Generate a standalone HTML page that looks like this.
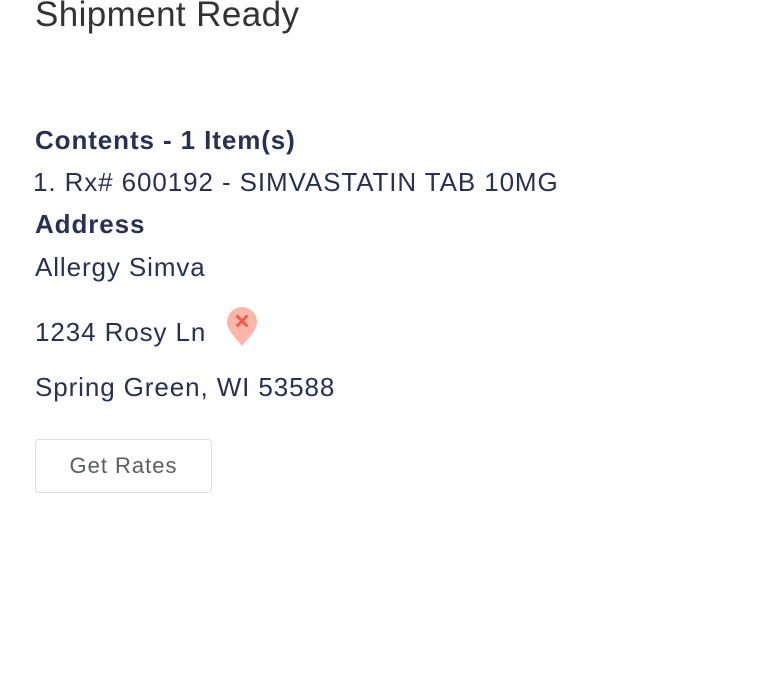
<!DOCTYPE html>
<html><head><meta charset="utf-8"><style>
body{margin:0;width:760px;height:674px;background:#fff;position:relative;overflow:hidden;font-family:"Liberation Sans",sans-serif;color:#283152}
.t{position:absolute;left:35px;white-space:nowrap;line-height:1}
.b{font-size:26px;letter-spacing:0.9px}
.bold{font-weight:bold}
.btn{position:absolute;left:35px;top:439px;width:177px;height:54px;border:1.5px solid #dcdde3;border-radius:4px;box-sizing:border-box;text-align:center;line-height:52px;font-size:22px;color:#5b5d63;letter-spacing:1px}
</style></head><body>
<div class="t" style="top:-3px;font-size:35px;color:#333;letter-spacing:0.4px">Shipment Ready</div>
<div class="t b bold" style="top:127px">Contents - 1 Item(s)</div>
<div class="t b" style="top:169px;left:33px">1. Rx# 600192 - SIMVASTATIN TAB 10MG</div>
<div class="t b bold" style="top:211px">Address</div>
<div class="t b" style="top:254px">Allergy Simva</div>
<div class="t b" style="top:319px">1234 Rosy Ln</div>
<svg style="position:absolute;left:226px;top:306px" width="32" height="42" viewBox="0 0 32 42">
<path d="M16 40 C11 33 1 25 1 16 A15 15 0 0 1 31 16 C31 25 21 33 16 40Z" fill="#fbb5a9"/>
<path d="M11.5 10.5 L20.5 19.5 M20.5 10.5 L11.5 19.5" stroke="#f25a4a" stroke-width="3" stroke-linecap="round"/>
</svg>
<div class="t b" style="top:374px">Spring Green, WI 53588</div>
<div class="btn">Get Rates</div>
</body></html>
